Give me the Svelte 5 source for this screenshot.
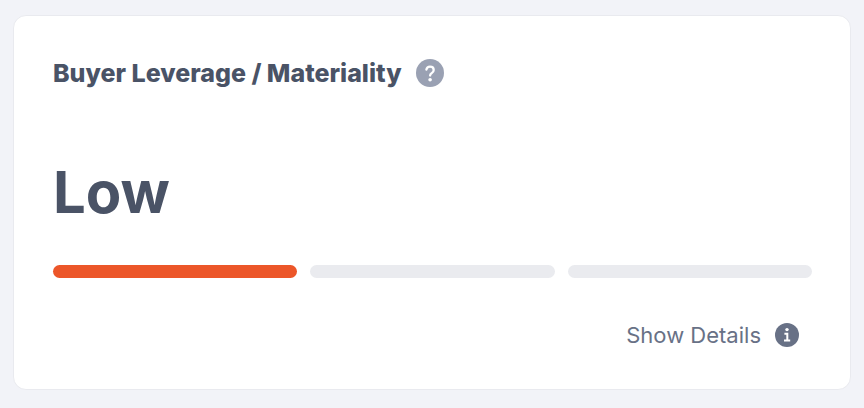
<script lang="ts">
	const title = 'Buyer Leverage / Materiality';
	const levels = ['Low', 'Medium', 'High'];

	let level = $state(1);
</script>

<main>
	<section class="card" aria-labelledby="card-title">
		<header>
			<h2 id="card-title">{title}</h2>
			<button class="help" type="button" aria-label="Help">
				<svg viewBox="0 0 28 28" aria-hidden="true">
					<circle cx="14" cy="14" r="14" fill="currentColor" />
					<path
						d="M10.4 10.6C10.8 8.6 12.1 7.6 14 7.6c2.2 0 3.7 1.3 3.7 3.3 0 1.6-.8 2.4-2 3.2-1.1.8-1.6 1.3-1.6 2.4"
						fill="none"
						stroke="#fff"
						stroke-width="2.3"
						stroke-linecap="round"
					/>
					<circle cx="14.1" cy="20.8" r="1.8" fill="#fff" />
				</svg>
			</button>
		</header>

		<p class="value">{levels[level - 1]}</p>

		<div class="meter">
			{#each levels as name, i (name)}
				<span class="segment" class:active={i < level}></span>
			{/each}
		</div>

		<footer>
			<button class="details" type="button">
				Show Details
				<svg viewBox="0 0 24 24" aria-hidden="true">
					<circle cx="12" cy="12" r="12" fill="currentColor" />
					<circle cx="12" cy="6.6" r="1.7" fill="#fff" />
					<path d="M9.4 10.8h2.9v6.6M9 17.6h6.2" fill="none" stroke="#fff" stroke-width="2" />
				</svg>
			</button>
		</footer>
	</section>
</main>

<style>
	:global(body) {
		margin: 0;
		background: #f2f3f8;
	}

	main {
		padding: 15px 13px 18px;
		font-family: Inter, 'Liberation Sans', sans-serif;
	}

	.card {
		padding: 38px 38px 35px 39px;
		background: #fff;
		border: 1px solid #e9eaef;
		border-radius: 13px;
	}

	header {
		display: flex;
		align-items: center;
		gap: 14px;
	}

	h2 {
		margin: 0;
		font-size: 25px;
		line-height: 38px;
		font-weight: 800;
		color: #4a5366;
	}

	button {
		padding: 0;
		border: 0;
		background: none;
		font: inherit;
		cursor: pointer;
	}

	svg {
		display: block;
	}

	.help {
		color: #9aa1b3;
	}

	.help svg {
		width: 28px;
		height: 28px;
	}

	.value {
		margin: 64px 0 37px;
		font-size: 58px;
		line-height: 72px;
		font-weight: 700;
		color: #4a5366;
	}

	.meter {
		display: flex;
		gap: 13px;
	}

	.segment {
		flex: 1;
		height: 13px;
		border-radius: 7px;
		background: #eaebef;
	}

	.segment.active {
		background: #ec5629;
	}

	footer {
		display: flex;
		justify-content: flex-end;
		margin-top: 38px;
		padding-right: 13px;
	}

	.details {
		display: flex;
		align-items: center;
		gap: 14px;
		font-size: 22px;
		line-height: 38px;
		color: #687186;
	}

	.details svg {
		width: 24px;
		height: 24px;
	}
</style>
